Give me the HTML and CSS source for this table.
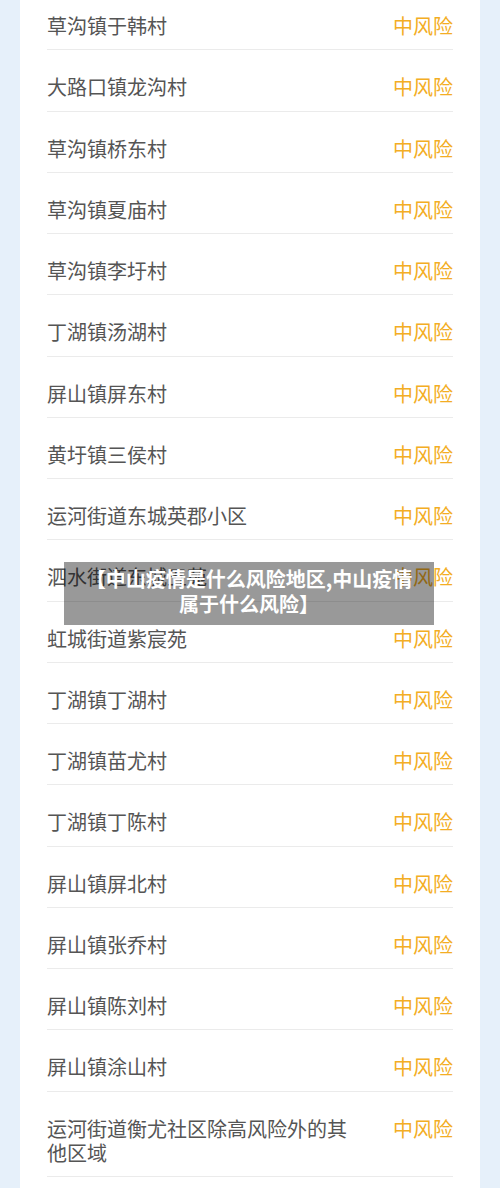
FILE: index.html
```html
<!DOCTYPE html>
<html lang="zh">
<head>
  <meta charset="UTF-8">
  <title>中山疫情是什么风险地区</title>
  <link rel="stylesheet" href="styles.css">
</head>
<body>
  <div class="page">
    <ul class="risk-list">
      <li class="row"><span class="place">草沟镇于韩村</span><span class="level">中风险</span></li>
      <li class="row"><span class="place">大路口镇龙沟村</span><span class="level">中风险</span></li>
      <li class="row"><span class="place">草沟镇桥东村</span><span class="level">中风险</span></li>
      <li class="row"><span class="place">草沟镇夏庙村</span><span class="level">中风险</span></li>
      <li class="row"><span class="place">草沟镇李圩村</span><span class="level">中风险</span></li>
      <li class="row"><span class="place">丁湖镇汤湖村</span><span class="level">中风险</span></li>
      <li class="row"><span class="place">屏山镇屏东村</span><span class="level">中风险</span></li>
      <li class="row"><span class="place">黄圩镇三侯村</span><span class="level">中风险</span></li>
      <li class="row"><span class="place">运河街道东城英郡小区</span><span class="level">中风险</span></li>
      <li class="row"><span class="place">泗水街道东城五苑</span><span class="level">中风险</span></li>
      <li class="row"><span class="place">虹城街道紫宸苑</span><span class="level">中风险</span></li>
      <li class="row"><span class="place">丁湖镇丁湖村</span><span class="level">中风险</span></li>
      <li class="row"><span class="place">丁湖镇苗尤村</span><span class="level">中风险</span></li>
      <li class="row"><span class="place">丁湖镇丁陈村</span><span class="level">中风险</span></li>
      <li class="row"><span class="place">屏山镇屏北村</span><span class="level">中风险</span></li>
      <li class="row"><span class="place">屏山镇张乔村</span><span class="level">中风险</span></li>
      <li class="row"><span class="place">屏山镇陈刘村</span><span class="level">中风险</span></li>
      <li class="row"><span class="place">屏山镇涂山村</span><span class="level">中风险</span></li>
      <li class="row"><span class="place">运河街道衡尤社区除高风险外的其他区域</span><span class="level">中风险</span></li>
    </ul>
  </div>

  <div class="title-bar">【中山疫情是什么风险地区,中山疫情属于什么风险】</div>
</body>
</html>
```

FILE: styles.css
```css
body {
  margin: 0;
  background: #e6f0fa;
  font-family: "Noto Sans CJK SC", "Noto Sans", sans-serif;
  overflow: hidden;
}
.page {
  margin: -11px 20px 0;
  padding: 0 27px;
  background: #fff;
  min-height: 1200px;
}
.risk-list {
  list-style: none;
  margin: 0;
  padding: 0;
}
.row {
  display: flex;
  justify-content: space-between;
  align-items: flex-start;
  padding: 25px 0 11.25px;
  line-height: 24px;
  border-bottom: 1px solid #ebebeb;
}
.place {
  width: 310px;
  font-size: 20px;
  color: #555;
}
.level {
  font-size: 20px;
  color: #f3ad24;
}
.title-bar {
  position: absolute;
  left: 64px;
  top: 562px;
  width: 370px;
  height: 63px;
  box-sizing: border-box;
  padding: 4px 18px 0;
  background: rgba(0, 0, 0, 0.4);
  color: #fff;
  font-size: 20px;
  font-weight: bold;
  line-height: 25px;
  text-align: center;
}
```
